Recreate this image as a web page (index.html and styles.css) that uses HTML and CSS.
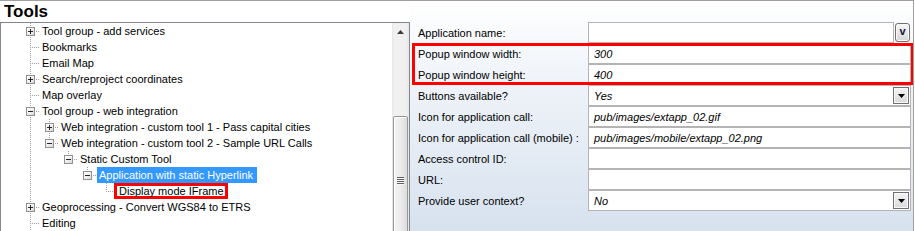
FILE: index.html
```html
<!DOCTYPE html>
<html>
<head>
<meta charset="utf-8">
<link rel="stylesheet" href="styles.css">
</head>
<body>
<div class="window">
  <div class="left">
    <div class="title">Tools</div>
    <div class="tree">
      <div class="tree-body">
        <div class="row"><span class="cell tee"><span class="box plus"></span></span><span class="label">Tool group - add services</span></div>
        <div class="row"><span class="cell tee"></span><span class="label">Bookmarks</span></div>
        <div class="row"><span class="cell tee"></span><span class="label">Email Map</span></div>
        <div class="row"><span class="cell tee"><span class="box plus"></span></span><span class="label">Search/reproject coordinates</span></div>
        <div class="row"><span class="cell tee"></span><span class="label">Map overlay</span></div>
        <div class="row"><span class="cell tee"><span class="box minus"></span></span><span class="label">Tool group - web integration</span></div>
        <div class="row"><span class="cell pipe"></span><span class="cell tee"><span class="box plus"></span></span><span class="label">Web integration - custom tool 1 - Pass capital cities</span></div>
        <div class="row"><span class="cell pipe"></span><span class="cell elbow"><span class="box minus"></span></span><span class="label">Web integration - custom tool 2 - Sample URL Calls</span></div>
        <div class="row"><span class="cell pipe"></span><span class="cell"></span><span class="cell elbow"><span class="box minus"></span></span><span class="label">Static Custom Tool</span></div>
        <div class="row"><span class="cell pipe"></span><span class="cell"></span><span class="cell"></span><span class="cell elbow"><span class="box minus"></span></span><span class="label selected">Application with static Hyperlink</span></div>
        <div class="row"><span class="cell pipe"></span><span class="cell"></span><span class="cell"></span><span class="cell"></span><span class="cell elbow"></span><span class="label marked">Display mode IFrame</span></div>
        <div class="row"><span class="cell tee"><span class="box plus"></span></span><span class="label">Geoprocessing - Convert WGS84 to ETRS</span></div>
        <div class="row"><span class="cell tee"></span><span class="label">Editing</span></div>
      </div>
      <div class="vscroll">
        <div class="vscroll-up"><svg width="7" height="4" viewBox="0 0 7 4"><polygon points="0,4 3.5,0 7,4" fill="#3c3c3c"/></svg></div>
        <div class="vscroll-thumb"><div class="grip"></div></div>
      </div>
    </div>
  </div>
  <div class="right">
    <div class="props">
      <div class="prop-row">
        <div class="prop-label">Application name:</div>
        <div class="prop-split">
          <div class="prop-value"></div>
          <div class="vbtn">v</div>
        </div>
      </div>
      <div class="marked-group">
        <div class="prop-row">
          <div class="prop-label">Popup window width:</div>
          <div class="prop-value">300</div>
        </div>
        <div class="prop-row">
          <div class="prop-label">Popup window height:</div>
          <div class="prop-value">400</div>
        </div>
      </div>
      <div class="prop-row">
        <div class="prop-label">Buttons available?</div>
        <div class="prop-value"><span class="val-text">Yes</span><span class="dd"><svg width="7" height="4" viewBox="0 0 7 4"><polygon points="0,0 7,0 3.5,4" fill="#000"/></svg></span></div>
      </div>
      <div class="prop-row">
        <div class="prop-label">Icon for application call:</div>
        <div class="prop-value">pub/images/extapp_02.gif</div>
      </div>
      <div class="prop-row">
        <div class="prop-label">Icon for application call (mobile) :</div>
        <div class="prop-value">pub/images/mobile/extapp_02.png</div>
      </div>
      <div class="prop-row">
        <div class="prop-label">Access control ID:</div>
        <div class="prop-value"></div>
      </div>
      <div class="prop-row">
        <div class="prop-label">URL:</div>
        <div class="prop-value"></div>
      </div>
      <div class="prop-row">
        <div class="prop-label">Provide user context?</div>
        <div class="prop-value"><span class="val-text">No</span><span class="dd"><svg width="7" height="4" viewBox="0 0 7 4"><polygon points="0,0 7,0 3.5,4" fill="#000"/></svg></span></div>
      </div>
    </div>
  </div>
</div>
</body>
</html>
```

FILE: styles.css
```css
:root {
  --vdots: repeating-linear-gradient(to bottom, #a0a0a0 0 1px, transparent 1px 2px);
  --hdots: repeating-linear-gradient(to right, #a0a0a0 0 1px, transparent 1px 2px);
}

html, body {
  margin: 0;
  padding: 0;
  background: #ffffff;
}

body {
  font-family: "Liberation Sans", Arial, sans-serif;
  font-size: 11px;
  color: #000;
}

.window {
  display: flex;
  width: 913px;
  height: 230px;
  border-top: 1px solid #a0a0a0;
  border-right: 1px solid #a0a0a0;
  overflow: hidden;
}

.left {
  width: 410px;
  flex: none;
  display: flex;
  flex-direction: column;
}

.title {
  height: 21px;
  line-height: 21px;
  padding-left: 4px;
  font-size: 17px;
  font-weight: bold;
  background: #fff;
}

.tree {
  flex: 1;
  min-height: 0;
  display: flex;
  border: 1px solid #828790;
  border-bottom: none;
  overflow: hidden;
}

.tree-body {
  flex: 1;
  padding-left: 20px;
  overflow: hidden;
  background: #fff;
}

.row {
  display: flex;
  height: 16px;
  line-height: 16px;
  white-space: nowrap;
}

.cell {
  display: block;
  flex: none;
  width: 19px;
  height: 16px;
  background-repeat: no-repeat;
}

.pipe {
  background-image: var(--vdots);
  background-size: 1px 16px;
  background-position: 9px 0;
}

.tee {
  background-image: var(--vdots), var(--hdots);
  background-size: 1px 16px, 10px 1px;
  background-position: 9px 0, 9px 8px;
  background-repeat: no-repeat;
}

.elbow {
  background-image: var(--vdots), var(--hdots);
  background-size: 1px 9px, 10px 1px;
  background-position: 9px 0, 9px 8px;
  background-repeat: no-repeat;
}

.box {
  display: block;
  width: 9px;
  height: 9px;
  box-sizing: border-box;
  margin: 4px 0 0 5px;
  border: 1px solid #919191;
  background-repeat: no-repeat;
}

.box.plus {
  background-image:
    linear-gradient(#1f2630, #1f2630),
    linear-gradient(#1f2630, #1f2630),
    linear-gradient(135deg, #ffffff 0%, #f0f0f0 50%, #d8d8d8 100%);
  background-size: 5px 1px, 1px 5px, 100% 100%;
  background-position: 1px 3px, 3px 1px, 0 0;
}

.box.minus {
  background-image:
    linear-gradient(#1f2630, #1f2630),
    linear-gradient(135deg, #ffffff 0%, #f0f0f0 50%, #d8d8d8 100%);
  background-size: 5px 1px, 100% 100%;
  background-position: 1px 3px, 0 0;
}

.label {
  padding: 0 2px;
  height: 16px;
}

.label.selected {
  background: #3399ff;
  color: #fff;
  padding-right: 4px;
}

.label.marked {
  box-sizing: border-box;
  margin-left: -2px;
  border: 3px solid #ff0000;
  line-height: 10px;
  padding: 0 1px 0 2px;
}

.vscroll {
  width: 17px;
  flex: none;
  display: flex;
  flex-direction: column;
  align-items: center;
  background: linear-gradient(to right, #e6e6e6 0, #f0f0f0 2px, #f0f0f0 14px, #e6e6e6 17px);
  overflow: hidden;
}

.vscroll-up {
  height: 17px;
  width: 17px;
  display: flex;
  justify-content: center;
  padding-top: 7px;
  box-sizing: border-box;
}

.vscroll-up svg {
  display: block;
}

.vscroll-thumb {
  margin-top: 82px;
  width: 15px;
  height: 130px;
  flex: none;
  box-sizing: border-box;
  border: 1px solid #979797;
  border-radius: 2px;
  background: linear-gradient(to right, #f4f4f4 0%, #ececec 50%, #dcdcdc 100%);
  box-shadow: inset 1px 1px 0 #ffffff;
  display: flex;
  justify-content: center;
}

.grip {
  margin-top: 60px;
  width: 7px;
  height: 8px;
  background: repeating-linear-gradient(to bottom, #5f5f5f 0 1px, #f8f8f8 1px 2px);
}

.right {
  flex: 1;
  padding: 21px 2px 0 0;
  background: linear-gradient(to bottom, #ffffff 0%, #f3f6fa 25%, #d7e2ef 100%);
}

.prop-row {
  display: flex;
  height: 21px;
}

.prop-label {
  width: 178px;
  flex: none;
  box-sizing: border-box;
  padding: 2px 0 0 8px;
  line-height: 19px;
  white-space: nowrap;
}

.prop-value {
  flex: 1;
  display: flex;
  box-sizing: border-box;
  height: 21px;
  border: 1px solid #b4b4b4;
  background: #fff;
  padding: 2px 0 0 5px;
  line-height: 17px;
  font-style: italic;
  white-space: nowrap;
}

.val-text {
  flex: 1;
}

.prop-split {
  flex: 1;
  display: flex;
  gap: 1px;
}

.vbtn {
  width: 15px;
  height: 19px;
  margin: 1px 1px 0 0;
  box-sizing: border-box;
  border: 1px solid #707070;
  border-radius: 3px;
  background: linear-gradient(to bottom, #f6f6f6 0%, #e8e8e8 50%, #d6d6d6 100%);
  box-shadow: inset 0 0 0 1px #fbfbfb;
  font-style: normal;
  font-weight: bold;
  font-size: 11px;
  line-height: 15px;
  text-align: center;
  color: #12123a;
}

.dd {
  width: 16px;
  height: 17px;
  margin: -1px 1px 0 0;
  flex: none;
  box-sizing: border-box;
  border: 1px solid #707070;
  background: linear-gradient(to bottom, #f4f4f4 0%, #e6e6e6 50%, #d9d9d9 100%);
  box-shadow: inset 0 0 0 1px #fafafa;
  display: flex;
  align-items: center;
  justify-content: center;
}

.dd svg {
  display: block;
  margin-top: 1px;
}

.marked-group {
  position: relative;
}

.marked-group::after {
  content: "";
  position: absolute;
  left: 2px;
  right: -3px;
  top: 0;
  bottom: 0;
  border: 3px solid #ff0000;
  pointer-events: none;
}
```
